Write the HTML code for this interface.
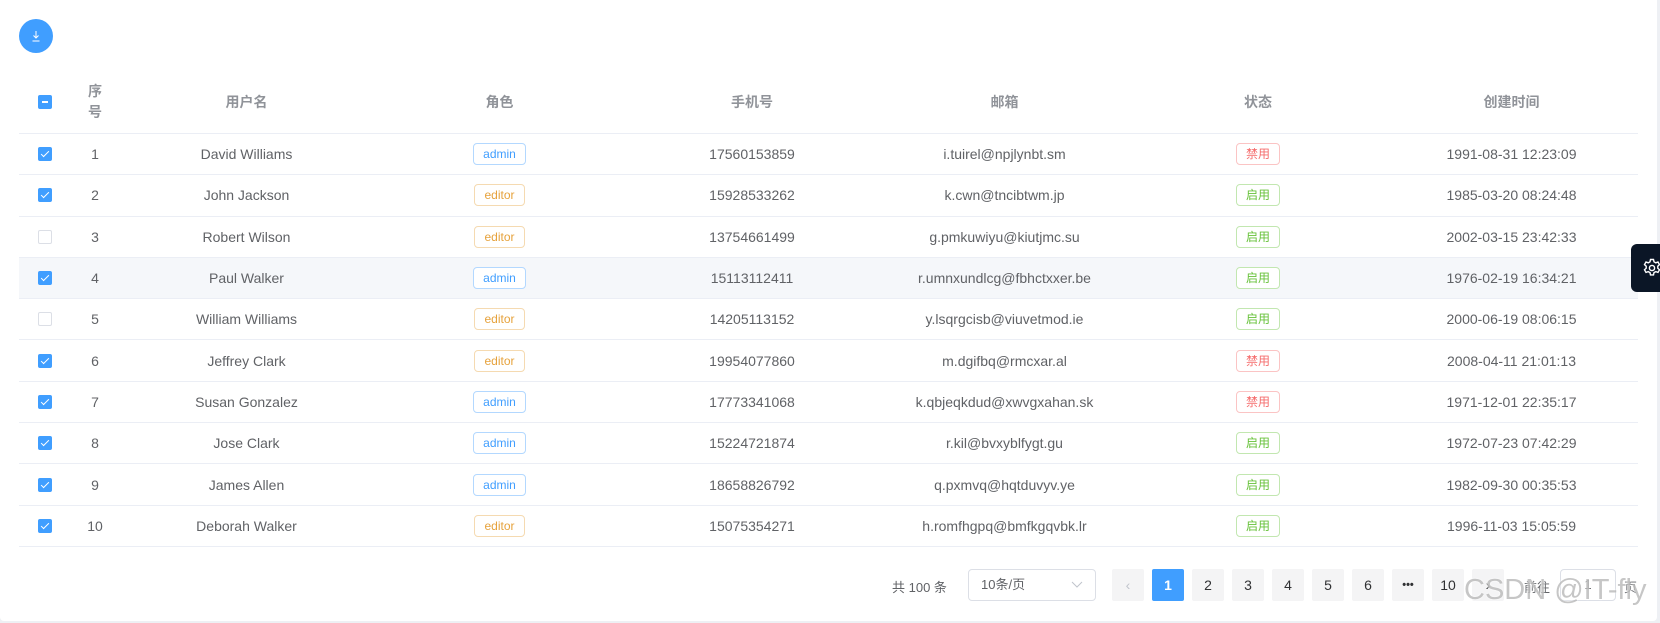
<!DOCTYPE html>
<html><head><meta charset="utf-8"><style>
*{box-sizing:border-box;margin:0;padding:0}
body{width:1660px;height:623px;background:#eef0f4;font-family:"Liberation Sans","Noto Sans CJK SC",sans-serif;position:relative;overflow:hidden;color:#606266;font-size:14px}
.card{position:absolute;left:0;top:0;width:1657px;height:621px;background:#fff;border-radius:0 0 4px 4px}
.dl{position:absolute;left:19px;top:19px;width:34px;height:34px;border-radius:50%;background:#409eff}
.tbl{position:absolute;left:19px;top:70px;width:1619px}
.row{position:absolute;left:0;width:1619px;border-bottom:1px solid #ebeef5}
.c{position:absolute;top:0;height:100%;display:flex;align-items:center;justify-content:center;text-align:center}
.hd .c{color:#909399;font-weight:bold}
.cb{width:14px;height:14px;border:1px solid #dcdfe6;border-radius:2px;background:#fff;position:relative}
.cb.on{background:#409eff;border-color:#409eff}
.cb.on::after{content:"";position:absolute;left:4px;top:1px;width:3px;height:7px;border:1px solid #fff;border-left:0;border-top:0;transform:rotate(45deg)}
.cb.ind{background:#409eff;border-color:#409eff}
.cb.ind::after{content:"";position:absolute;left:3px;top:5px;width:6px;height:2px;background:#fff}
.tag{display:inline-block;height:22px;line-height:20px;padding:0 9px;font-size:12px;border-radius:4px;border:1px solid}
.ad{color:#409eff;background:#fff;border-color:#b3d8ff}
.ed{color:#e6a23c;background:#fff;border-color:#f5dab1}
.on2{color:#67c23a;background:#fff;border-color:#c2e7b0}
.off{color:#f56c6c;background:#fff;border-color:#fbc4c4}
.pg{position:absolute;top:569px;height:32px;width:32px;background:#f4f4f5;border-radius:2px;display:flex;align-items:center;justify-content:center;font-size:14px;color:#303133}
.gear{position:absolute;left:1631px;top:244px;width:29px;height:48px;background:#0b1626;border-radius:6px 0 0 6px}
</style></head><body>
<div class="card"></div>
<div class="dl"><svg width="34" height="34" viewBox="0 0 34 34"><path d="M17 12v7M14.5 16.5L17 19l2.5-2.5M13.5 22h7" stroke="#fff" stroke-width="1" fill="none"/></svg></div>
<div class="tbl">
<div class="row hd" style="top:0;height:64px">
<div class="c" style="left:0;width:51px"><span class="cb ind"></span></div>
<div class="c" style="left:51px;width:50px;line-height:21px">序<br>号</div>
<div class="c" style="left:101px;width:253px">用户名</div>
<div class="c" style="left:354px;width:253px">角色</div>
<div class="c" style="left:607px;width:252px">手机号</div>
<div class="c" style="left:859px;width:253px">邮箱</div>
<div class="c" style="left:1112px;width:254px">状态</div>
<div class="c" style="left:1366px;width:253px">创建时间</div>
</div>
</div>
<div class="tbl" id="rows"></div>
<script>
var d=[[1,1,"David Williams","admin","17560153859","i.tuirel@npjlynbt.sm",0,"1991-08-31 12:23:09"],
[2,1,"John Jackson","editor","15928533262","k.cwn@tncibtwm.jp",1,"1985-03-20 08:24:48"],
[3,0,"Robert Wilson","editor","13754661499","g.pmkuwiyu@kiutjmc.su",1,"2002-03-15 23:42:33"],
[4,1,"Paul Walker","admin","15113112411","r.umnxundlcg@fbhctxxer.be",1,"1976-02-19 16:34:21"],
[5,0,"William Williams","editor","14205113152","y.lsqrgcisb@viuvetmod.ie",1,"2000-06-19 08:06:15"],
[6,1,"Jeffrey Clark","editor","19954077860","m.dgifbq@rmcxar.al",0,"2008-04-11 21:01:13"],
[7,1,"Susan Gonzalez","admin","17773341068","k.qbjeqkdud@xwvgxahan.sk",0,"1971-12-01 22:35:17"],
[8,1,"Jose Clark","admin","15224721874","r.kil@bvxyblfygt.gu",1,"1972-07-23 07:42:29"],
[9,1,"James Allen","admin","18658826792","q.pxmvq@hqtduvyv.ye",1,"1982-09-30 00:35:53"],
[10,1,"Deborah Walker","editor","15075354271","h.romfhgpq@bmfkgqvbk.lr",1,"1996-11-03 15:05:59"]];
var h="";d.forEach(function(r,i){var t=64+i*41.3;
h+='<div class="row" style="top:'+t+'px;height:41.3px;'+(i==3?'background:#f5f7fa':'')+'">'+
'<div class="c" style="left:0;width:51px"><span class="cb'+(r[1]?' on':'')+'"></span></div>'+
'<div class="c" style="left:51px;width:50px">'+r[0]+'</div>'+
'<div class="c" style="left:101px;width:253px">'+r[2]+'</div>'+
'<div class="c" style="left:354px;width:253px"><span class="tag '+(r[3]=="admin"?"ad":"ed")+'">'+r[3]+'</span></div>'+
'<div class="c" style="left:607px;width:252px">'+r[4]+'</div>'+
'<div class="c" style="left:859px;width:253px">'+r[5]+'</div>'+
'<div class="c" style="left:1112px;width:254px"><span class="tag '+(r[6]?"on2":"off")+'">'+(r[6]?"启用":"禁用")+'</span></div>'+
'<div class="c" style="left:1366px;width:253px">'+r[7]+'</div></div>';});
document.getElementById("rows").innerHTML=h;
</script>
<div style="position:absolute;left:892px;top:577px;font-size:13px">共 100 条</div>
<div style="position:absolute;left:968px;top:569px;width:128px;height:32px;border:1px solid #dcdfe6;border-radius:4px;font-size:13px;padding-left:12px;line-height:30px">10条/页<svg style="position:absolute;right:12px;top:11px" width="12" height="8" viewBox="0 0 12 8"><path d="M1 1l5 5 5-5" stroke="#c0c4cc" fill="none"/></svg></div>
<div class="pg" style="left:1112px;color:#c0c4cc">&lsaquo;</div>
<div class="pg" style="left:1152px;background:#409eff;color:#fff;font-weight:bold">1</div>
<div class="pg" style="left:1192px">2</div>
<div class="pg" style="left:1232px">3</div>
<div class="pg" style="left:1272px">4</div>
<div class="pg" style="left:1312px">5</div>
<div class="pg" style="left:1352px">6</div>
<div class="pg" style="left:1392px;font-size:11px;font-weight:bold">•••</div>
<div class="pg" style="left:1432px">10</div>
<div class="pg" style="left:1472px">&rsaquo;</div>
<div style="position:absolute;left:1524px;top:577px;font-size:13px">前往</div>
<div style="position:absolute;left:1560px;top:569px;width:56px;height:32px;border:1px solid #dcdfe6;border-radius:4px;text-align:center;line-height:30px;font-size:13px">1</div>
<div style="position:absolute;left:1624px;top:577px;font-size:13px">页</div>
<div style="position:absolute;left:1464px;top:574px;font-size:29px;color:rgba(160,160,160,.6);text-shadow:0 0 2px #fff;white-space:nowrap">CSDN @IT-fly</div>
<div class="gear"><svg style="position:absolute;left:11px;top:14px" width="20" height="20" viewBox="0 0 20 20"><path d="M8.5 1.5h3l.5 2.3 1.8 1 2.2-.8 1.5 2.6-1.7 1.6v2l1.7 1.6-1.5 2.6-2.2-.8-1.8 1-.5 2.3h-3l-.5-2.3-1.8-1-2.2.8-1.5-2.6 1.7-1.6v-2L2.5 6.6 4 4l2.2.8 1.8-1z" stroke="#fff" stroke-width="1.4" fill="none"/><circle cx="10" cy="10" r="2.6" stroke="#fff" stroke-width="1.4" fill="none"/></svg></div>
</body></html>
